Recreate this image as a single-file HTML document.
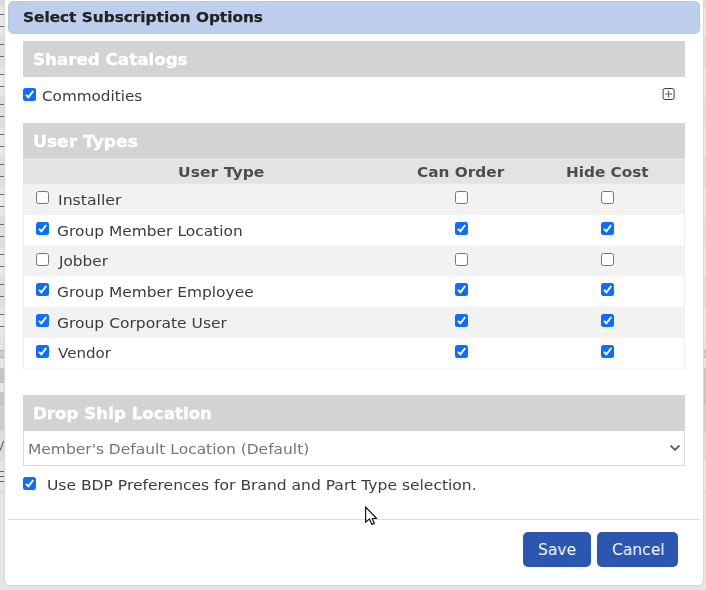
<!DOCTYPE html>
<html><head><meta charset="utf-8">
<style>
html,body{margin:0;padding:0;}
body{width:706px;height:590px;overflow:hidden;position:relative;background:#e5e5e5;font-family:"DejaVu Sans","Liberation Sans",sans-serif;font-size:15px;color:#333;}
.abs{position:absolute;}
.tx{white-space:nowrap;transform-origin:0 0;will-change:transform;}
#dlg{left:4.1px;top:-8px;width:699.7px;height:594px;box-sizing:border-box;background:#fff;border:1px solid #d8d8d8;border-radius:6px;}
#title{left:8px;top:1px;width:692px;height:33px;box-sizing:border-box;background:#bdcfed;border:1px solid #b6c9eb;border-radius:5px;}
.ttl{font-weight:bold;font-size:14.9px;line-height:18px;color:#222;-webkit-text-stroke:0.25px #222;}
.sec{left:23px;width:662px;height:36px;background:#d3d3d3;}
.sh{font-weight:bold;font-size:16.5px;line-height:20px;color:#fff;-webkit-text-stroke:0.3px #fff;}
.t{color:#3c3c3c;font-size:14.9px;line-height:18px;}
.cb{width:13px;height:13px;box-sizing:border-box;border-radius:2.5px;}
.cb.off{background:#fff;border:1px solid #767676;}
.cb.on{background:#0d6efd;}
.cb.on svg{position:absolute;left:0;top:0;}
.row{left:23px;width:662px;box-sizing:border-box;border-left:1px solid #ececec;border-right:1px solid #ececec;}
.row.odd{background:#f2f2f2;}
.th{font-weight:bold;color:#4d4d4d;font-size:14.9px;line-height:18px;}
.btn{background:#2b57b1;border-radius:5px;height:35px;top:532px;}
.bt{color:#fff;font-size:16px;line-height:20px;}
</style></head><body>

<div class="abs" style="left:0;top:7px;width:706px;height:30px;background:#e7e7e7"></div>
<div class="abs" style="left:0;top:14px;width:4px;height:1px;background:#6e6e6e"></div>
<div class="abs" style="left:0;top:26px;width:4px;height:1px;background:#6e6e6e"></div>
<div class="abs" style="left:0;top:37px;width:706px;height:30px;background:#dedede"></div>
<div class="abs" style="left:0;top:44px;width:4px;height:1px;background:#6e6e6e"></div>
<div class="abs" style="left:0;top:56px;width:4px;height:1px;background:#6e6e6e"></div>
<div class="abs" style="left:0;top:67px;width:706px;height:30px;background:#e7e7e7"></div>
<div class="abs" style="left:0;top:74px;width:4px;height:1px;background:#6e6e6e"></div>
<div class="abs" style="left:0;top:86px;width:4px;height:1px;background:#6e6e6e"></div>
<div class="abs" style="left:0;top:97px;width:706px;height:30px;background:#dedede"></div>
<div class="abs" style="left:0;top:104px;width:4px;height:1px;background:#6e6e6e"></div>
<div class="abs" style="left:0;top:116px;width:4px;height:1px;background:#6e6e6e"></div>
<div class="abs" style="left:0;top:127px;width:706px;height:30px;background:#e7e7e7"></div>
<div class="abs" style="left:0;top:134px;width:4px;height:1px;background:#6e6e6e"></div>
<div class="abs" style="left:0;top:146px;width:4px;height:1px;background:#6e6e6e"></div>
<div class="abs" style="left:0;top:157px;width:706px;height:30px;background:#dedede"></div>
<div class="abs" style="left:0;top:164px;width:4px;height:1px;background:#6e6e6e"></div>
<div class="abs" style="left:0;top:176px;width:4px;height:1px;background:#6e6e6e"></div>
<div class="abs" style="left:0;top:187px;width:706px;height:30px;background:#e7e7e7"></div>
<div class="abs" style="left:0;top:194px;width:4px;height:1px;background:#6e6e6e"></div>
<div class="abs" style="left:0;top:206px;width:4px;height:1px;background:#6e6e6e"></div>
<div class="abs" style="left:0;top:217px;width:706px;height:30px;background:#dedede"></div>
<div class="abs" style="left:0;top:224px;width:4px;height:1px;background:#6e6e6e"></div>
<div class="abs" style="left:0;top:236px;width:4px;height:1px;background:#6e6e6e"></div>
<div class="abs" style="left:0;top:247px;width:706px;height:30px;background:#e7e7e7"></div>
<div class="abs" style="left:0;top:254px;width:4px;height:1px;background:#6e6e6e"></div>
<div class="abs" style="left:0;top:266px;width:4px;height:1px;background:#6e6e6e"></div>
<div class="abs" style="left:0;top:277px;width:706px;height:30px;background:#dedede"></div>
<div class="abs" style="left:0;top:284px;width:4px;height:1px;background:#6e6e6e"></div>
<div class="abs" style="left:0;top:296px;width:4px;height:1px;background:#6e6e6e"></div>
<div class="abs" style="left:0;top:307px;width:706px;height:30px;background:#e7e7e7"></div>
<div class="abs" style="left:0;top:314px;width:4px;height:1px;background:#6e6e6e"></div>
<div class="abs" style="left:0;top:326px;width:4px;height:1px;background:#6e6e6e"></div>
<div class="abs" style="left:0;top:337px;width:706px;height:30px;background:#dedede"></div>
<div class="abs" style="left:0;top:344px;width:4px;height:1px;background:#6e6e6e"></div>
<div class="abs" style="left:0;top:0;width:706px;height:7px;background:#dadada"></div>
<div class="abs" style="left:0;top:337px;width:706px;height:13px;background:#e4e4e4"></div>
<div class="abs" style="left:0;top:350px;width:706px;height:1px;background:#b0b0b0"></div>
<div class="abs" style="left:0;top:351px;width:706px;height:6px;background:#cccccc"></div>
<div class="abs" style="left:0;top:357px;width:706px;height:1px;background:#b0b0b0"></div>
<div class="abs" style="left:0;top:358px;width:706px;height:10px;background:#e4e4e4"></div>
<div class="abs" style="left:0;top:368px;width:706px;height:37px;background:#c4c4c4"></div>
<div class="abs" style="left:0;top:405px;width:706px;height:1px;background:#d6d6d6"></div>
<div class="abs" style="left:0;top:406px;width:706px;height:25px;background:#cecece"></div>
<div class="abs" style="left:0;top:431px;width:706px;height:30px;background:#dcdcdc"></div>
<div class="abs" style="left:0;top:461px;width:706px;height:30px;background:#e6e6e6"></div>
<div class="abs" style="left:0;top:491px;width:706px;height:1px;background:#cfcfcf"></div>
<div class="abs" style="left:0;top:383px;width:4px;height:9px;background:#e6e6e6"></div>
<svg class="abs" style="left:0;top:440px" width="5" height="12" viewBox="0 0 5 12"><path d="M0.2 10.5 L3.6 1" stroke="#5a6070" stroke-width="1.1" fill="none"/></svg>
<div class="abs" style="left:0;top:471px;width:4px;height:1px;background:#5c6470"></div>
<div class="abs" style="left:0;top:476px;width:4px;height:1px;background:#5c6470"></div>
<div class="abs" style="left:0;top:481px;width:4px;height:1px;background:#5c6470"></div>
<div id="dlg" class="abs"></div>
<div id="title" class="abs"></div>
<div class="abs tx ttl" style="left:22.5px;top:8px;transform:scaleX(1.0280);">Select Subscription Options</div>
<div class="abs sec" style="top:41px"></div>
<div class="abs tx sh" style="left:32.5px;top:50px;transform:scaleX(1.0132);">Shared Catalogs</div>
<div class="abs cb on" style="left:23px;top:88px"><svg width="13" height="13" viewBox="0 0 13 13"><path d="M2.9 6.9 L5.4 9.3 L10.2 3" fill="none" stroke="#fff" stroke-width="2"/></svg></div>
<div class="abs tx t" style="left:41.5px;top:87px;transform:scaleX(1.0216);">Commodities</div>
<svg class="abs" style="left:662px;top:88px" width="14" height="12" viewBox="0 0 14 12"><rect x="1.1" y="0.5" width="11" height="11" rx="2" fill="#fff" stroke="#3a3a3a"/><path d="M3.2 6H10M6.6 2.6V9.4" stroke="#555" stroke-width="1"/></svg>
<div class="abs sec" style="top:123px"></div>
<div class="abs tx sh" style="left:33px;top:132px;transform:scaleX(1.0370);">User Types</div>
<svg class="abs" style="left:23px;top:150px" width="662" height="230" viewBox="23 150 662 230"><rect x="23" y="158.6" width="662" height="1.2" fill="#ececec"/><rect x="23" y="159.5" width="662" height="24.40" fill="#e3e3e3"/><rect x="23" y="183.9" width="662" height="185.60" fill="#ececec"/><rect x="23.9" y="183.9" width="660.3" height="30.85" fill="#f2f2f2"/><rect x="23.9" y="214.75" width="660.3" height="30.80" fill="#ffffff"/><rect x="23.9" y="245.55" width="660.3" height="30.75" fill="#f2f2f2"/><rect x="23.9" y="276.3" width="660.3" height="30.65" fill="#ffffff"/><rect x="23.9" y="306.95" width="660.3" height="30.70" fill="#f2f2f2"/><rect x="23.9" y="337.65" width="660.3" height="30.95" fill="#ffffff"/></svg>
<div class="abs tx th" style="left:178px;top:163px;transform:scaleX(1.0481);">User Type</div>
<div class="abs tx th" style="left:416.5px;top:163px;transform:scaleX(1.0274);">Can Order</div>
<div class="abs tx th" style="left:565.5px;top:163px;transform:scaleX(1.0250);">Hide Cost</div>
<div class="abs cb off" style="left:36px;top:191px"></div>
<div class="abs cb off" style="left:455px;top:191px"></div>
<div class="abs cb off" style="left:601px;top:191px"></div>
<div class="abs tx t" style="left:58px;top:191px;transform:scaleX(1.0559);">Installer</div>
<div class="abs cb on" style="left:36px;top:222px"><svg width="13" height="13" viewBox="0 0 13 13"><path d="M2.9 6.9 L5.4 9.3 L10.2 3" fill="none" stroke="#fff" stroke-width="2"/></svg></div>
<div class="abs cb on" style="left:455px;top:222px"><svg width="13" height="13" viewBox="0 0 13 13"><path d="M2.9 6.9 L5.4 9.3 L10.2 3" fill="none" stroke="#fff" stroke-width="2"/></svg></div>
<div class="abs cb on" style="left:601px;top:222px"><svg width="13" height="13" viewBox="0 0 13 13"><path d="M2.9 6.9 L5.4 9.3 L10.2 3" fill="none" stroke="#fff" stroke-width="2"/></svg></div>
<div class="abs tx t" style="left:57px;top:222px;transform:scaleX(1.0373);">Group Member Location</div>
<div class="abs cb off" style="left:36px;top:253px"></div>
<div class="abs cb off" style="left:455px;top:253px"></div>
<div class="abs cb off" style="left:601px;top:253px"></div>
<div class="abs tx t" style="left:58.5px;top:252px;transform:scaleX(1.0265);">Jobber</div>
<div class="abs cb on" style="left:36px;top:283px"><svg width="13" height="13" viewBox="0 0 13 13"><path d="M2.9 6.9 L5.4 9.3 L10.2 3" fill="none" stroke="#fff" stroke-width="2"/></svg></div>
<div class="abs cb on" style="left:455px;top:283px"><svg width="13" height="13" viewBox="0 0 13 13"><path d="M2.9 6.9 L5.4 9.3 L10.2 3" fill="none" stroke="#fff" stroke-width="2"/></svg></div>
<div class="abs cb on" style="left:601px;top:283px"><svg width="13" height="13" viewBox="0 0 13 13"><path d="M2.9 6.9 L5.4 9.3 L10.2 3" fill="none" stroke="#fff" stroke-width="2"/></svg></div>
<div class="abs tx t" style="left:57px;top:283px;transform:scaleX(1.0362);">Group Member Employee</div>
<div class="abs cb on" style="left:36px;top:314px"><svg width="13" height="13" viewBox="0 0 13 13"><path d="M2.9 6.9 L5.4 9.3 L10.2 3" fill="none" stroke="#fff" stroke-width="2"/></svg></div>
<div class="abs cb on" style="left:455px;top:314px"><svg width="13" height="13" viewBox="0 0 13 13"><path d="M2.9 6.9 L5.4 9.3 L10.2 3" fill="none" stroke="#fff" stroke-width="2"/></svg></div>
<div class="abs cb on" style="left:601px;top:314px"><svg width="13" height="13" viewBox="0 0 13 13"><path d="M2.9 6.9 L5.4 9.3 L10.2 3" fill="none" stroke="#fff" stroke-width="2"/></svg></div>
<div class="abs tx t" style="left:57px;top:314px;transform:scaleX(1.0414);">Group Corporate User</div>
<div class="abs cb on" style="left:36px;top:345px"><svg width="13" height="13" viewBox="0 0 13 13"><path d="M2.9 6.9 L5.4 9.3 L10.2 3" fill="none" stroke="#fff" stroke-width="2"/></svg></div>
<div class="abs cb on" style="left:455px;top:345px"><svg width="13" height="13" viewBox="0 0 13 13"><path d="M2.9 6.9 L5.4 9.3 L10.2 3" fill="none" stroke="#fff" stroke-width="2"/></svg></div>
<div class="abs cb on" style="left:601px;top:345px"><svg width="13" height="13" viewBox="0 0 13 13"><path d="M2.9 6.9 L5.4 9.3 L10.2 3" fill="none" stroke="#fff" stroke-width="2"/></svg></div>
<div class="abs tx t" style="left:58px;top:344px;transform:scaleX(1.0132);">Vendor</div>
<div class="abs sec" style="top:395px"></div>
<div class="abs tx sh" style="left:33px;top:404px;transform:scaleX(1.0115);">Drop Ship Location</div>
<div class="abs" style="left:23px;top:431px;width:662px;height:35px;box-sizing:border-box;border:1px solid #dadada;border-top:none;background:#fff"></div>
<div class="abs tx t" style="left:28px;top:440px;transform:scaleX(1.0390);color:#757575;">Member's Default Location (Default)</div>
<svg class="abs" style="left:669px;top:444.3px" width="12" height="8" viewBox="0 0 12 8"><path d="M1.6 1.5 L6 5.9 L10.4 1.5" fill="none" stroke="#606060" stroke-width="1.8"/></svg>
<div class="abs cb on" style="left:23px;top:477px"><svg width="13" height="13" viewBox="0 0 13 13"><path d="M2.9 6.9 L5.4 9.3 L10.2 3" fill="none" stroke="#fff" stroke-width="2"/></svg></div>
<div class="abs tx t" style="left:46.5px;top:476px;transform:scaleX(1.0427);">Use BDP Preferences for Brand and Part Type selection.</div>
<div class="abs" style="left:8px;top:519px;width:692px;height:1px;background:#ddd"></div>
<div class="abs btn" style="left:523px;width:68px"></div>
<div class="abs btn" style="left:597px;width:81px"></div>
<div class="abs tx bt" style="left:538px;top:540px;transform:scaleX(0.9711);">Save</div>
<div class="abs tx bt" style="left:612px;top:540px;transform:scaleX(0.9712);">Cancel</div>
<svg class="abs" style="left:363px;top:504px" width="18" height="24" viewBox="-2 -2 18 24"><path d="M0.6 1 L0.6 16.2 L4.4 12.9 L6.9 18.4 L9.4 17.4 L7.2 12.5 L11.6 12.5 Z" fill="#fff" stroke="#14141e" stroke-width="1.2" stroke-linejoin="round"/></svg>
</body></html>
